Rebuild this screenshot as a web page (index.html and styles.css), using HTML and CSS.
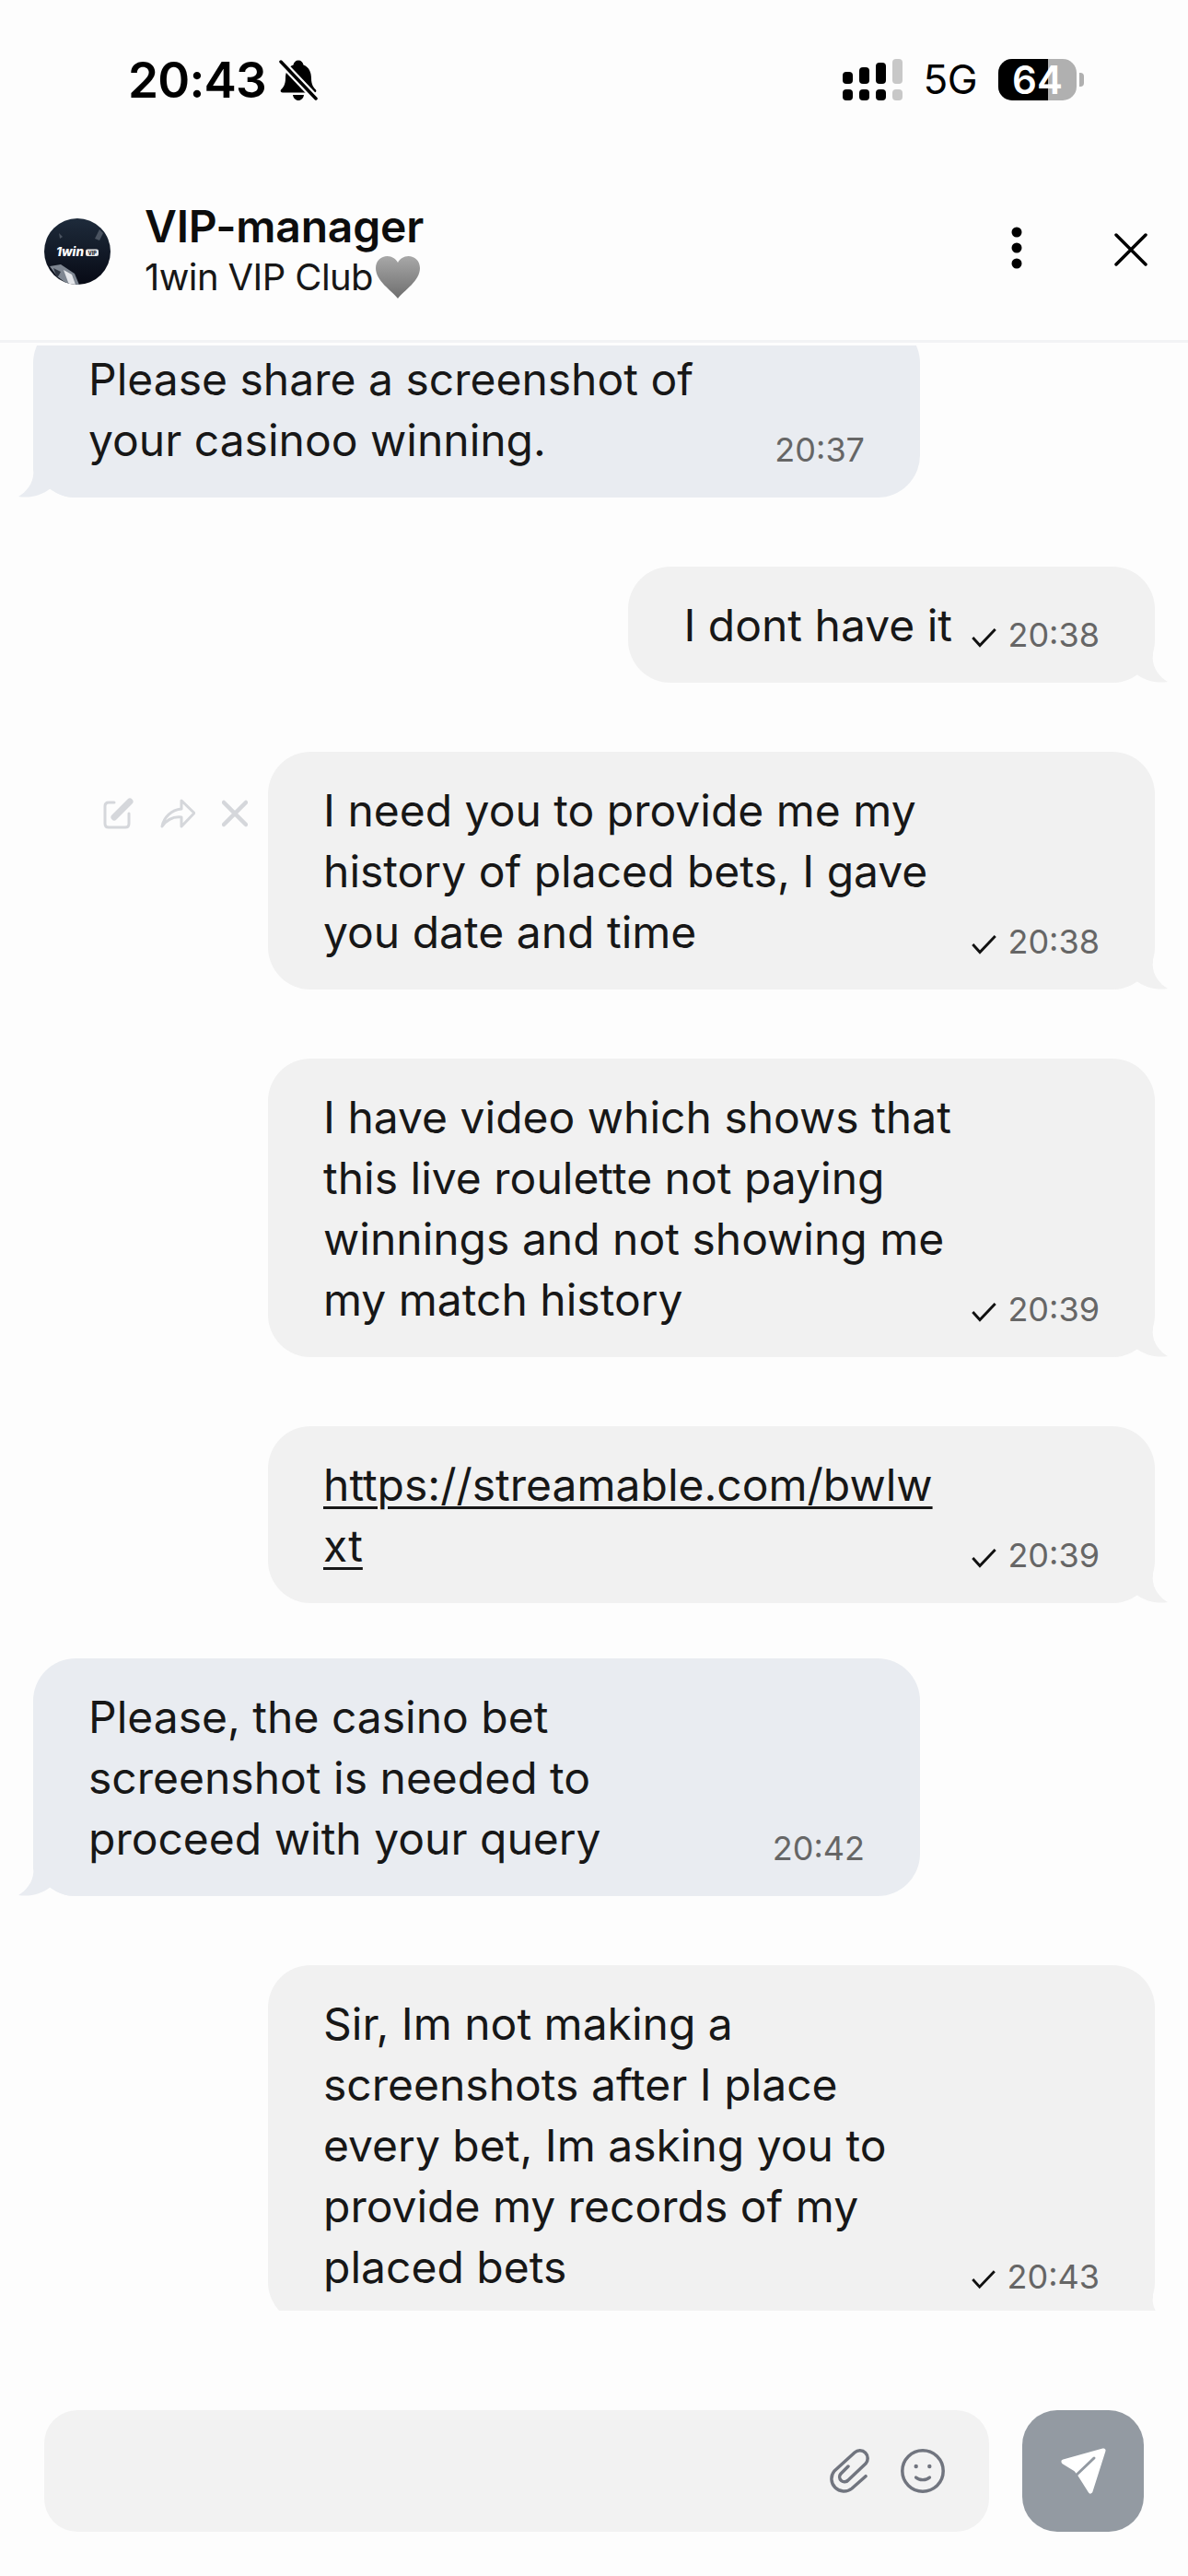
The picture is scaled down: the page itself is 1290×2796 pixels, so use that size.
FILE: index.html
```html
<!DOCTYPE html>
<html lang="en">
<head>
    <meta charset="UTF-8">
    <meta name="viewport" content="width=device-width, initial-scale=1.0">
    <title>VIP-manager chat</title>
    <link rel="stylesheet" href="styles.css">
</head>
<body>
    <div class="screen">
        <div class="status-bar">
            <div class="status-left">
                <span class="clock">20:43</span>
                <svg class="bell" width="42" height="44" viewBox="0 0 42 44">
                    <path d="M21 0.5C24 0.5 26 2.5 26.5 5.5C33 8 35 14 35 20C35 27 37.5 30 40 32.5C41 34 40 35.5 38 35.5H4C2 35.5 1 34 2 32.5C4.5 30 7 27 7 20C7 14 9 8 15.5 5.5C16 2.5 18 0.5 21 0.5Z" fill="#000"/>
                    <path d="M15 38H27C26.5 41.5 24 44 21 44C18 44 15.500 41.5 15 38Z" fill="#000"/>
                    <path d="M2 2L40 42" stroke="#fdfdfd" stroke-width="8"/>
                    <path d="M2 2L40 42" stroke="#000" stroke-width="3.500" stroke-linecap="round"/>
                </svg>
            </div>
            <div class="status-right">
                <div class="signal">
                    <div class="signal-col"><span class="bar bar-1"></span><span class="dot"></span></div>
                    <div class="signal-col"><span class="bar bar-2"></span><span class="dot"></span></div>
                    <div class="signal-col"><span class="bar bar-3"></span><span class="dot"></span></div>
                    <div class="signal-col off"><span class="bar bar-4"></span><span class="dot"></span></div>
                </div>
                <span class="network">5G</span>
                <div class="battery">
                    <div class="battery-body"><span class="battery-level"></span><span class="battery-text">64</span></div>
                    <span class="battery-nub"></span>
                </div>
            </div>
        </div>

        <header class="chat-header">
            <svg class="avatar" width="72" height="72" viewBox="0 0 72 72">
                <defs>
                    <linearGradient id="avatarBg" x1="0" y1="0" x2="0" y2="1">
                        <stop offset="0" stop-color="#1e2b3b"/>
                        <stop offset="1" stop-color="#070a15"/>
                    </linearGradient>
                    <clipPath id="avatarClip"><circle cx="36" cy="36" r="36"/></clipPath>
                </defs>
                <g clip-path="url(#avatarClip)">
                    <rect width="72" height="72" fill="url(#avatarBg)"/>
                    <path d="M6 52L18 50L33 60L38 72H26L14 63Z" fill="#7e8691"/>
                    <path d="M21 56L30 61L34 72H27Z" fill="#e4e6ea"/>
                    <path d="M10 54L18 58L14 65Z" fill="#2e3541"/>
                    <path d="M60 12L64 16L60 24L55 22Z" fill="#4a5360"/>
                    <path d="M16 16L20 20L17 22Z" fill="#4a5360"/>
                </g>
                <text x="13" y="41" class="avatar-text">1win</text>
                <rect x="45" y="33.500" width="14" height="7.500" rx="2" fill="#e8e8e8"/>
                <text x="47.500" y="39.500" class="avatar-badge">VIP</text>
            </svg>
            <div class="chat-title">
                <h1>VIP-manager</h1>
                <p>1win VIP Club<svg class="heart" width="48" height="46" viewBox="0 0 48 46">
                    <defs>
                        <linearGradient id="heartBg" x1="0" y1="0" x2="0" y2="1">
                            <stop offset="0" stop-color="#a8a8a8"/>
                            <stop offset="1" stop-color="#6e6e6e"/>
                        </linearGradient>
                    </defs>
                    <path d="M24 46C17 37 0 27 0 13C0 5 6 0 12.500 0C17.500 0 22 3 24 7C26 3 30.500 0 35.500 0C42 0 48 5 48 13C48 27 31 37 24 46Z" fill="url(#heartBg)"/>
                </svg></p>
            </div>
            <div class="header-actions">
                <svg width="12" height="46" viewBox="0 0 12 46">
                    <circle cx="6" cy="6" r="5.500"/>
                    <circle cx="6" cy="23" r="5.500"/>
                    <circle cx="6" cy="40" r="5.500"/>
                </svg>
                <svg class="close-icon" width="36" height="36" viewBox="0 0 36 36">
                    <path d="M2 2L34 34M34 2L2 34" stroke="#000" stroke-width="3.500" stroke-linecap="round"/>
                </svg>
            </div>
        </header>

        <div class="chat-list">
            <div class="msg msg-in first">
                <div class="bubble">
                    <div class="msg-text">Please share a screenshot of your casinoo winning.</div>
                    <div class="meta"><span class="time">20:37</span></div>
                    <svg class="tail" width="62" height="46" viewBox="0 0 62 46"><path d="M16 0V16C18 28 9 40 0 45C12 47 25 44 35 36C42 42 50 46 62 46V0Z"/></svg>
                </div>
            </div>

            <div class="msg msg-out">
                <div class="bubble">
                    <div class="msg-text">I dont have it</div>
                    <div class="meta">
                        <svg class="check" width="32" height="24" viewBox="0 0 32 24"><path d="M1.500 12L10.500 22L30 1.500" fill="none" stroke="#111" stroke-width="3.400"/></svg>
                        <span class="time">20:38</span>
                    </div>
                    <svg class="tail" width="62" height="46" viewBox="0 0 62 46"><path d="M16 0V16C18 28 9 40 0 45C12 47 25 44 35 36C42 42 50 46 62 46V0Z"/></svg>
                </div>
            </div>

            <div class="msg msg-out">
                <div class="msg-actions">
                    <svg width="34" height="34" viewBox="0 0 34 34">
                        <path d="M13 5H7C4.500 5 3 6.500 3 9V28C3 30.500 4.500 32 7 32H25C27.500 32 29 30.500 29 28V17" fill="none" stroke="#d5d7db" stroke-width="3" stroke-linecap="round"/>
                        <path d="M13 21L30 4" stroke="#d5d7db" stroke-width="7" stroke-linecap="round"/>
                    </svg>
                    <svg width="38" height="34" viewBox="0 0 38 34">
                        <path d="M2 31C4 21 12 13 23 12V3L37 16.500L23 31V21C14 20 7 24 2 31Z" fill="none" stroke="#d5d7db" stroke-width="3" stroke-linejoin="round"/>
                    </svg>
                    <svg width="28" height="30" viewBox="0 0 28 30">
                        <path d="M2 3L26 27M26 3L2 27" stroke="#d5d7db" stroke-width="4.500" stroke-linecap="round"/>
                    </svg>
                </div>
                <div class="bubble">
                    <div class="msg-text">I need you to provide me my history of placed bets, I gave you date and time</div>
                    <div class="meta">
                        <svg class="check" width="32" height="24" viewBox="0 0 32 24"><path d="M1.500 12L10.500 22L30 1.500" fill="none" stroke="#111" stroke-width="3.400"/></svg>
                        <span class="time">20:38</span>
                    </div>
                    <svg class="tail" width="62" height="46" viewBox="0 0 62 46"><path d="M16 0V16C18 28 9 40 0 45C12 47 25 44 35 36C42 42 50 46 62 46V0Z"/></svg>
                </div>
            </div>

            <div class="msg msg-out">
                <div class="bubble">
                    <div class="msg-text">I have video which shows that this live roulette not paying winnings and not showing me my match history</div>
                    <div class="meta">
                        <svg class="check" width="32" height="24" viewBox="0 0 32 24"><path d="M1.500 12L10.500 22L30 1.500" fill="none" stroke="#111" stroke-width="3.400"/></svg>
                        <span class="time">20:39</span>
                    </div>
                    <svg class="tail" width="62" height="46" viewBox="0 0 62 46"><path d="M16 0V16C18 28 9 40 0 45C12 47 25 44 35 36C42 42 50 46 62 46V0Z"/></svg>
                </div>
            </div>

            <div class="msg msg-out">
                <div class="bubble">
                    <div class="msg-text link">https://streamable.com/bwlwxt</div>
                    <div class="meta">
                        <svg class="check" width="32" height="24" viewBox="0 0 32 24"><path d="M1.500 12L10.500 22L30 1.500" fill="none" stroke="#111" stroke-width="3.400"/></svg>
                        <span class="time">20:39</span>
                    </div>
                    <svg class="tail" width="62" height="46" viewBox="0 0 62 46"><path d="M16 0V16C18 28 9 40 0 45C12 47 25 44 35 36C42 42 50 46 62 46V0Z"/></svg>
                </div>
            </div>

            <div class="msg msg-in">
                <div class="bubble">
                    <div class="msg-text">Please, the casino bet screenshot is needed to proceed with your query</div>
                    <div class="meta"><span class="time">20:42</span></div>
                    <svg class="tail" width="62" height="46" viewBox="0 0 62 46"><path d="M16 0V16C18 28 9 40 0 45C12 47 25 44 35 36C42 42 50 46 62 46V0Z"/></svg>
                </div>
            </div>

            <div class="msg msg-out">
                <div class="bubble">
                    <div class="msg-text">Sir, Im not making a screenshots after I place every bet, Im asking you to provide my records of my placed bets</div>
                    <div class="meta">
                        <svg class="check" width="32" height="24" viewBox="0 0 32 24"><path d="M1.500 12L10.500 22L30 1.500" fill="none" stroke="#111" stroke-width="3.400"/></svg>
                        <span class="time">20:43</span>
                    </div>
                    <svg class="tail" width="62" height="46" viewBox="0 0 62 46"><path d="M16 0V16C18 28 9 40 0 45C12 47 25 44 35 36C42 42 50 46 62 46V0Z"/></svg>
                </div>
            </div>
        </div>

        <div class="composer">
            <div class="composer-input">
                <svg width="44" height="52" viewBox="0 0 44 52">
                    <path d="M40 31.700L25 45A13.500 13.500 0 0 1 6 26L28 6A8.500 8.500 0 0 1 40 18L21 36A5 5 0 0 1 13 29L21 21" fill="none" stroke="#71757f" stroke-width="3.500" stroke-linecap="round" stroke-linejoin="round"/>
                </svg>
                <svg width="48" height="48" viewBox="0 0 48 48">
                    <circle cx="24" cy="24" r="22.200" fill="none" stroke="#71757f" stroke-width="3.500"/>
                    <circle cx="16.700" cy="19" r="2.200" fill="#71757f"/>
                    <circle cx="31.300" cy="19" r="2.200" fill="#71757f"/>
                    <path d="M16.500 31C20 34.500 28 34.500 31.500 31" fill="none" stroke="#71757f" stroke-width="3.200" stroke-linecap="round"/>
                </svg>
            </div>
            <button class="send-button">
                <svg width="132" height="132" viewBox="0 0 132 132">
                    <path d="M88 44L45 56L58 64L62 69L74 88Z" fill="#fff" stroke="#fff" stroke-width="5" stroke-linejoin="round"/>
                    <path d="M57 72L78 52" stroke="#939aa2" stroke-width="3" stroke-linecap="round"/>
                </svg>
            </button>
        </div>
    </div>
</body>
</html>
```

FILE: styles.css
```css
* {
    margin: 0;
    padding: 0;
    box-sizing: border-box;
    font-family: Inter, 'Noto Sans', sans-serif;
}

body {
    background-color: #fdfdfd;
    color: #171717;
}

.screen {
    width: 1290px;
    height: 2796px;
    display: flex;
    flex-direction: column;
    overflow: hidden;
}

/* Status bar */
.status-bar {
    height: 172px;
    flex-shrink: 0;
    padding: 64px 113px 0 139px;
    display: flex;
    justify-content: space-between;
    align-items: flex-start;
}

.status-left {
    display: flex;
    align-items: center;
    gap: 14px;
    height: 46px;
}

.clock {
    font-size: 53px;
    font-weight: 600;
    line-height: 46px;
    color: #000;
    letter-spacing: -0.8px;
}

.status-right {
    display: flex;
    align-items: center;
    height: 45px;
}

.signal {
    display: flex;
    gap: 7px;
    margin-right: 22px;
}

.signal-col {
    width: 11px;
    height: 45px;
    display: flex;
    flex-direction: column;
    justify-content: flex-end;
    gap: 6px;
}

.signal-col span {
    display: block;
    background: #000;
    border-radius: 4px;
}

.signal-col.off span {
    background: #c8c8c8;
}

.dot {
    height: 12px;
}

.bar-1 { height: 13px; }
.bar-2 { height: 18px; }
.bar-3 { height: 23px; }
.bar-4 { height: 27px; }

.network {
    font-size: 44px;
    line-height: 45px;
    color: #000;
    margin-right: 23px;
    letter-spacing: -0.5px;
}

.battery {
    display: flex;
    align-items: center;
    gap: 3px;
}

.battery-body {
    position: relative;
    width: 85px;
    height: 45px;
    background: #b0b0b0;
    border-radius: 15px;
}

.battery-level {
    position: absolute;
    left: 0;
    top: 0;
    bottom: 0;
    width: 54px;
    background: #000;
    border-radius: 15px 0 0 15px;
}

.battery-text {
    position: absolute;
    left: 0;
    right: 0;
    top: 0;
    text-align: center;
    font-size: 42px;
    font-weight: 600;
    line-height: 45px;
    color: #fff;
}

.battery-nub {
    width: 5px;
    height: 15px;
    background: #b0b0b0;
    border-radius: 0 4px 4px 0;
}

/* Header */
.chat-header {
    height: 200px;
    flex-shrink: 0;
    padding: 0 44px 2px 48px;
    border-bottom: 3px solid #f2f3f5;
    display: flex;
    align-items: center;
}

.avatar {
    flex-shrink: 0;
    margin-right: 37px;
    margin-top: 6px;
}

.avatar-text {
    font-family: Inter, sans-serif;
    font-size: 13.5px;
    font-weight: 800;
    font-style: italic;
    fill: #fff;
}

.avatar-badge {
    font-family: Inter, sans-serif;
    font-size: 5.5px;
    font-weight: 800;
    fill: #1c2430;
}

.chat-title {
    flex: 1;
    padding-top: 3px;
}

.chat-title h1 {
    font-size: 48px;
    font-weight: 600;
    line-height: 56px;
    color: #0d0d0d;
    letter-spacing: -0.2px;
}

.chat-title p {
    display: flex;
    align-items: center;
    margin-top: 3px;
    font-size: 40px;
    line-height: 48px;
    color: #171717;
    letter-spacing: -0.6px;
}

.heart {
    margin-left: 3px;
}

.header-actions {
    display: flex;
    align-items: center;
    gap: 100px;
    margin-bottom: 2px;
}

.close-icon {
    margin-top: 4px;
}

/* Messages */
.chat-list {
    height: 2133px;
    flex-shrink: 0;
    margin-top: 3px;
    padding: 0 36px;
    overflow: hidden;
    display: flex;
    flex-direction: column;
    gap: 75px;
}

.msg {
    display: flex;
    flex-shrink: 0;
    align-items: flex-start;
}

.msg.first {
    margin-top: -27px;
}

.msg-out {
    justify-content: flex-end;
}

.msg-in {
    justify-content: flex-start;
}

/* a reply sits closer to the message before it */
.msg-out + .msg-in {
    margin-top: -15px;
}

.msg-actions {
    display: flex;
    align-items: center;
    gap: 29px;
    margin-top: 50px;
    margin-right: 22px;
}

.bubble {
    position: relative;
    display: flex;
    align-items: flex-end;
    padding: 31px 60px 29px;
    border-radius: 46px;
}

.msg-in .bubble {
    background-color: #e9ecf1;
}

.msg-out .bubble {
    background-color: #f1f1f1;
}

.msg-text {
    max-width: 683px;
    font-size: 48px;
    line-height: 66px;
    color: #171717;
}

.msg-text.link {
    text-decoration: underline;
    text-decoration-thickness: 3px;
    text-underline-offset: 6px;
    word-break: break-all;
}

.meta {
    flex-shrink: 0;
    width: 139px;
    margin-left: 21px;
    margin-bottom: 6px;
    display: flex;
    justify-content: flex-end;
    align-items: flex-end;
    gap: 12px;
}

.check {
    margin-bottom: 2px;
}

.time {
    font-size: 36px;
    line-height: 34px;
    color: #666;
}

.tail {
    position: absolute;
    bottom: 0;
}

.msg-in .tail {
    left: -16px;
    fill: #e9ecf1;
}

.msg-out .tail {
    right: -14px;
    fill: #f1f1f1;
    transform: scaleX(-1);
}

/* Composer */
.composer {
    flex: 1;
    padding: 108px 48px 48px;
    display: flex;
    gap: 36px;
}

.composer-input {
    flex: 1;
    height: 132px;
    background: #f2f2f2;
    border-radius: 36px;
    padding-right: 48px;
    display: flex;
    justify-content: flex-end;
    align-items: center;
    gap: 34px;
}

.send-button {
    width: 132px;
    height: 132px;
    background: #939aa2;
    border: none;
    border-radius: 38px;
    cursor: pointer;
}
```
